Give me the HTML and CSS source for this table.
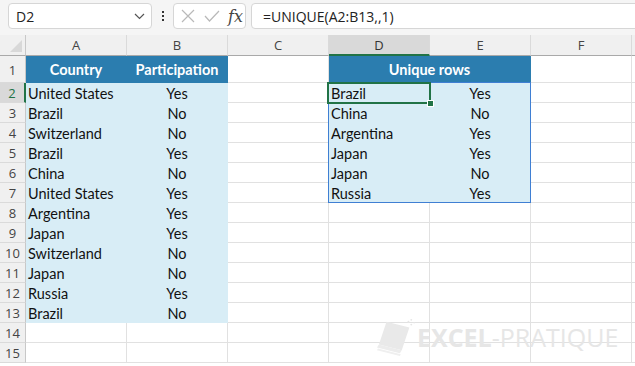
FILE: index.html
```html
<!DOCTYPE html>
<html>
<head>
<meta charset="utf-8">
<link rel="stylesheet" href="styles.css">
</head>
<body>
<div class="app">
  <div class="fbar">
    <div class="namebox"><span>D2</span>
      <svg class="chev" width="11" height="7" viewBox="0 0 11 7"><path d="M1 1 L5.5 5.5 L10 1" fill="none" stroke="#555" stroke-width="1.2"/></svg>
    </div>
    <div class="vdots"><i></i><i></i><i></i></div>
    <div class="fxbox">
      <svg width="14" height="14" viewBox="0 0 14 14"><path d="M1 1 L13 13 M13 1 L1 13" stroke="#b9b9b9" stroke-width="1.2" fill="none"/></svg>
      <svg width="16" height="12" viewBox="0 0 16 12"><path d="M1 6 L5.5 11 L15 1" stroke="#b9b9b9" stroke-width="1.2" fill="none"/></svg>
      <span class="fx">fx</span>
    </div>
    <div class="formula">=UNIQUE(A2:B13,,1)</div>
  </div>

  <div class="sheetwrap">
  <div class="sheet">
    <div class="corner"><span class="tri"></span></div>
    <div class="ch">A</div><div class="ch">B</div><div class="ch">C</div><div class="ch chsel">D</div><div class="ch">E</div><div class="ch">F</div><div class="ch chend"></div>

    <div class="rh tall">1</div>
    <div class="c hd tall ctr">Country</div><div class="c hd tall ctr">Participation</div><div class="c tall"></div>
    <div class="c hd tall ctr span2">Unique rows</div><div class="c tall"></div><div class="c tall end"></div>

    <div class="rh rhsel">2</div>
    <div class="c lb">United States</div><div class="c lb ctr">Yes</div><div class="c"></div>
    <div class="c lb">Brazil</div><div class="c lb ctr">Yes</div><div class="c"></div><div class="c end"></div>

    <div class="rh">3</div>
    <div class="c lb">Brazil</div><div class="c lb ctr">No</div><div class="c"></div>
    <div class="c lb">China</div><div class="c lb ctr">No</div><div class="c"></div><div class="c end"></div>

    <div class="rh">4</div>
    <div class="c lb">Switzerland</div><div class="c lb ctr">No</div><div class="c"></div>
    <div class="c lb">Argentina</div><div class="c lb ctr">Yes</div><div class="c"></div><div class="c end"></div>

    <div class="rh">5</div>
    <div class="c lb">Brazil</div><div class="c lb ctr">Yes</div><div class="c"></div>
    <div class="c lb">Japan</div><div class="c lb ctr">Yes</div><div class="c"></div><div class="c end"></div>

    <div class="rh">6</div>
    <div class="c lb">China</div><div class="c lb ctr">No</div><div class="c"></div>
    <div class="c lb">Japan</div><div class="c lb ctr">No</div><div class="c"></div><div class="c end"></div>

    <div class="rh">7</div>
    <div class="c lb">United States</div><div class="c lb ctr">Yes</div><div class="c"></div>
    <div class="c lb">Russia</div><div class="c lb ctr">Yes</div><div class="c"></div><div class="c end"></div>

    <div class="rh">8</div>
    <div class="c lb">Argentina</div><div class="c lb ctr">Yes</div><div class="c"></div>
    <div class="c"></div><div class="c"></div><div class="c"></div><div class="c end"></div>

    <div class="rh">9</div>
    <div class="c lb">Japan</div><div class="c lb ctr">Yes</div><div class="c"></div>
    <div class="c"></div><div class="c"></div><div class="c"></div><div class="c end"></div>

    <div class="rh">10</div>
    <div class="c lb">Switzerland</div><div class="c lb ctr">No</div><div class="c"></div>
    <div class="c"></div><div class="c"></div><div class="c"></div><div class="c end"></div>

    <div class="rh">11</div>
    <div class="c lb">Japan</div><div class="c lb ctr">No</div><div class="c"></div>
    <div class="c"></div><div class="c"></div><div class="c"></div><div class="c end"></div>

    <div class="rh">12</div>
    <div class="c lb">Russia</div><div class="c lb ctr">Yes</div><div class="c"></div>
    <div class="c"></div><div class="c"></div><div class="c"></div><div class="c end"></div>

    <div class="rh">13</div>
    <div class="c lb">Brazil</div><div class="c lb ctr">No</div><div class="c"></div>
    <div class="c"></div><div class="c"></div><div class="c"></div><div class="c end"></div>

    <div class="rh">14</div>
    <div class="c"></div><div class="c"></div><div class="c"></div>
    <div class="c"></div><div class="c"></div><div class="c"></div><div class="c end"></div>

    <div class="rh">15</div>
    <div class="c"></div><div class="c"></div><div class="c"></div>
    <div class="c"></div><div class="c"></div><div class="c"></div><div class="c end"></div>
  </div>

  <div class="sheet overlay">
    <div class="spill"></div>
    <div class="selbox"><span class="handle"></span></div>
  </div>

  <div class="watermark">
    <svg width="40" height="40" viewBox="0 0 42 40">
      <polygon points="10,4 34,10 26,34 2,28" fill="#e9e9e9"/>
      <polygon points="2,28 26,34 24,37 0,31" fill="#ececec"/>
      <polygon points="1,32 25,38 24,40 0,34" fill="#efefef"/>
      <circle cx="33" cy="4" r="1" fill="#e6e6e6"/><circle cx="36" cy="2" r="1" fill="#e6e6e6"/>
      <circle cx="36" cy="7" r="1" fill="#e6e6e6"/><circle cx="39" cy="5" r="0.8" fill="#e6e6e6"/>
    </svg>
    <span class="wm-b">EXCEL</span><span class="wm-l">-PRATIQUE</span>
  </div>
  </div>
</div>
</body>
</html>
```

FILE: styles.css
```css
* { box-sizing: border-box; }
html, body { margin: 0; padding: 0; background: #ffffff; }
.app { width: 635px; height: 366px; overflow: hidden; font-family: "Lato", "Open Sans", sans-serif; }

.fbar {
  height: 35px;
  background: #f5f5f5;
  display: flex;
  align-items: flex-start;
  padding: 3px 0 0 8px;
}
.namebox {
  width: 144px; height: 26px;
  background: #fff;
  border: 1px solid #d6d6d6;
  border-radius: 4px;
  display: flex; align-items: center; justify-content: space-between;
  padding: 0 6px 0 7px;
  font-family: "Open Sans", sans-serif; font-size: 14px; color: #222;
}
.vdots {
  width: 21px; height: 26px;
  display: flex; flex-direction: column; align-items: center; justify-content: center; gap: 2px;
}
.vdots i { display: block; width: 2px; height: 2px; background: #333; }
.fxbox {
  width: 73px; height: 26px;
  background: #fff;
  border: 1px solid #d6d6d6; border-radius: 4px;
  display: flex; align-items: center; gap: 9px;
  padding-left: 7px;
}
.fx { font-family: "DejaVu Serif", "Liberation Serif", serif; font-style: italic; font-size: 16px; color: #444; margin-left: -1px; }
.formula {
  flex: 1; height: 26px; margin-left: 5px; margin-right: -6px;
  background: #fff;
  border: 1px solid #d6d6d6; border-radius: 4px;
  padding-left: 11px;
  display: flex; align-items: center;
  font-family: "Open Sans", sans-serif; font-size: 14px; color: #222;
}

.sheetwrap { position: relative; }
.sheet {
  display: grid;
  grid-template-columns: 26px repeat(6, 101px) 1fr;
  grid-template-rows: 21px 27px repeat(14, 20px);
  font-size: 14.5px; color: #111;
}
.overlay {
  position: absolute; left: 0; top: 0; right: 0; bottom: 0;
  pointer-events: none;
}
.corner { background: #f0f0f0; border-right: 1px solid #c8c8c8; border-bottom: 1px solid #a9a9a9; position: relative; }
.tri { position: absolute; right: 3px; bottom: 3px; width: 0; height: 0; border-left: 12px solid transparent; border-bottom: 12px solid #d8d8d8; }
.ch {
  background: #f0f0f0;
  border-right: 1px solid #dadada; border-bottom: 1px solid #a9a9a9;
  display: flex; align-items: center; justify-content: center;
  font-family: "Open Sans", sans-serif; font-size: 13px; color: #444;
}
.chsel { background: #d9d9d9; border-bottom: 2px solid #217346; color: #333; }
.chend { border-right: none; }
.rh {
  background: #f0f0f0;
  border-right: 1px solid #c8c8c8; border-bottom: 1px solid #dadada;
  display: flex; align-items: center; justify-content: center;
  padding-top: 1px;
  font-family: "Open Sans", sans-serif; font-size: 13px; color: #444;
}
.rhsel { background: #d9d9d9; border-right: 2px solid #217346; color: #217346; }

.c {
  border-right: 1px solid #e1e1e1; border-bottom: 1px solid #e1e1e1;
  display: flex; align-items: center;
  padding: 1px 0 0 2px;
  white-space: nowrap;
}
.c.end { border-right: none; }
.ctr { justify-content: center; padding-left: 0; }
.hd { background: #2b7daf; border-color: #2b7daf; color: #fff; font-weight: bold; }
.lb { background: #d8edf6; border-color: #d8edf6; }
.span2 { grid-column: span 2; }

.spill {
  grid-column: 5 / 7; grid-row: 3 / 9;
  margin: -1px 0 0 -1px;
  border: 1px solid #3f7fd3;
}
.selbox {
  grid-column: 5 / 6; grid-row: 3 / 4;
  margin: -1px -1px -1px -2px;
  border: 2px solid #217346;
  position: relative;
}
.handle {
  position: absolute; right: -5px; bottom: -5px;
  width: 7px; height: 7px;
  background: #217346; border: 1px solid #fff;
}

.watermark {
  position: absolute; left: 377px; top: 282px;
  display: flex; align-items: center;
  white-space: nowrap;
  font-family: "Open Sans", sans-serif; font-size: 25px; color: #e6e6e6;
  pointer-events: none;
}
.wm-b { font-weight: 700; }
.wm-l { font-weight: 400; }
```
